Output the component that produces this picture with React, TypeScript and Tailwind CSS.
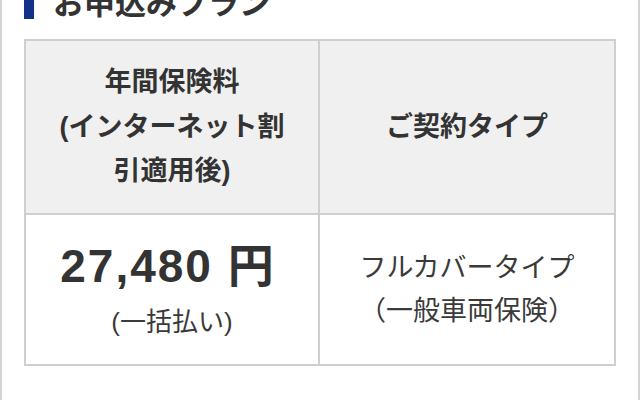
const font = "font-['Liberation_Sans','Noto_Sans_CJK_JP',sans-serif]";

export default function App() {
  return (
    <div className={`${font} min-h-[400px] overflow-hidden border-x-2 border-[#d3d3d3] bg-white px-[22px] text-[#333]`}>
      {/* section title */}
      <div className="-mt-[16px] flex h-[35px] items-stretch">
        <div className="w-[10px] bg-[#12318a]" />
        <h2 className="mt-[2px] ml-[19px] text-[31px] font-bold leading-[36px]">お申込みプラン</h2>
      </div>

      {/* plan table */}
      <div className="mt-[20px] grid grid-cols-[294px_1fr] border-2 border-[#cfcfcf]">
        <div className="flex h-[174px] items-center justify-center border-r-2 border-b-2 border-[#cfcfcf] bg-[#f0f0f0] text-center text-[27px] font-bold leading-[44.5px]">
          <p>
            年間保険料
            <br />
            (インターネット割
            <br />
            引適用後)
          </p>
        </div>
        <div className="flex h-[174px] items-center justify-center border-b-2 border-[#cfcfcf] bg-[#f0f0f0] text-center text-[27px] font-bold">
          <p>ご契約タイプ</p>
        </div>
        <div className="flex h-[149px] flex-col items-center justify-center border-r-2 border-[#cfcfcf] text-center">
          <p className="pr-[8px] text-[46px] font-bold leading-[52px] tracking-[2px]">
            27,480 円
          </p>
          <p className="mt-[12px] text-[26px] leading-[36px] text-[#3a3a3a]">(一括払い)</p>
        </div>
        <div className="flex h-[149px] items-center justify-center text-center text-[27px] leading-[43px] text-[#3a3a3a]">
          <p>
            フルカバータイプ
            <br />
            （一般車両保険）
          </p>
        </div>
      </div>
    </div>
  );
}
